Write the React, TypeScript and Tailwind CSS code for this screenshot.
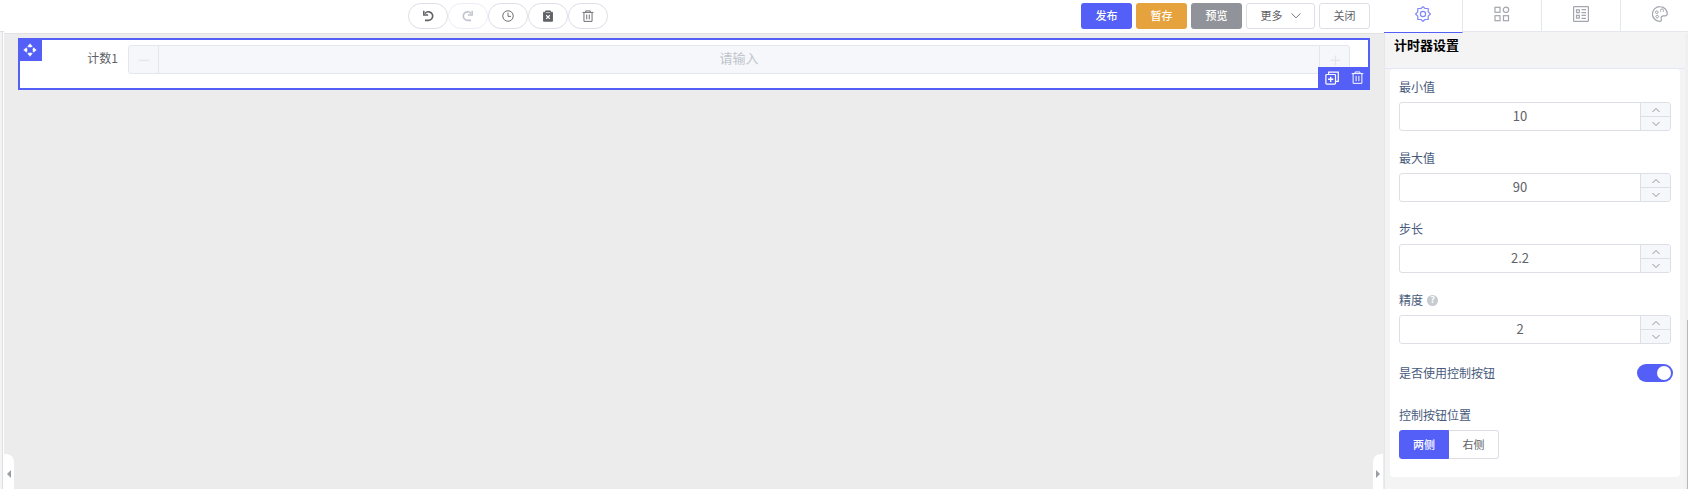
import React from 'react'

function Svg({ size = 12, children }: { size?: number; children: React.ReactNode }) {
  return (
    <svg
      width={size}
      height={size}
      viewBox="0 0 16 16"
      fill="none"
      stroke="currentColor"
      strokeWidth="1.2"
      aria-hidden="true"
    >
      {children}
    </svg>
  )
}

const UndoIcon = () => (
  <Svg>
    <path d="M4 4.6A5.7 5.7 0 1 1 8.5 13.8H4" strokeWidth="2.2" />
    <path d="M2.4 1v5.8h5.8" strokeWidth="2" />
  </Svg>
)

const RedoIcon = () => (
  <Svg>
    <path d="M12 4.6A5.7 5.7 0 1 0 7.5 13.8H12" strokeWidth="2.2" />
    <path d="M13.6 1v5.8H7.8" strokeWidth="2" />
  </Svg>
)

const ClockIcon = () => (
  <Svg>
    <circle cx="8" cy="8" r="7" />
    <path d="M8 3.5V8.5h4" />
  </Svg>
)

const ClearIcon = () => (
  <Svg>
    <path d="M2 3h2.8V1.2h6.4V3H14v12H2z" fill="currentColor" />
    <path d="M5.2 3.4h5.6" stroke="#fff" strokeWidth="0.8" />
    <path d="M5.6 7l4.8 4.8M10.4 7l-4.8 4.8" stroke="#fff" strokeWidth="1.5" />
  </Svg>
)

const TrashIcon = ({ size = 12 }: { size?: number }) => (
  <Svg size={size}>
    <path d="M.8 3.2h14.4M5 3V1.2h6V3M2.6 3.4v11.8h10.8V3.4M6.3 6v6.5M9.7 6v6.5" />
  </Svg>
)

const CopyIcon = () => (
  <Svg size={14}>
    <path d="M4.2 4V1.2h11v10.6H12" strokeWidth="1.4" />
    <rect x="1" y="4" width="11" height="11" rx="1" strokeWidth="1.4" />
    <path d="M6.5 6.5v6M3.5 9.5h6" strokeWidth="1.6" />
  </Svg>
)

const MoveIcon = () => (
  <Svg size={14}>
    <path
      d="M8 .8l2.6 3.2-1.4.6H6.800L5.400 4zM8 15.200l2.600-3.200-1.400-.6H6.800l-1.400.6zM.8 8L4 5.400l.6 1.400v2.400L4 10.600zM15.200 8L12 5.400l-.6 1.400v2.400l.6 1.400z"
      fill="currentColor"
      strokeWidth="0.6"
      strokeLinejoin="round"
    />
  </Svg>
)

const Chevron = ({ up = false, size = 8 }: { up?: boolean; size?: number }) => (
  <Svg size={size}>
    <path d={up ? 'M1 12l7-7 7 7' : 'M1 4l7 7 7-7'} strokeWidth={size > 8 ? 1.4 : 2} />
  </Svg>
)

const GearIcon = () => (
  <Svg size={16}>
    <path
      d="M8 .6l2 1.9h3.2v3.3L15.4 8l-2.2 2.2v3.3H10l-2 1.9-2-1.9H2.8v-3.3L.6 8l2.2-2.2V2.5H6z"
      strokeLinejoin="round"
    />
    <circle cx="8" cy="8" r="2.6" />
  </Svg>
)

const GridIcon = () => (
  <Svg size={16}>
    <rect x="1" y="1.3" width="5" height="5" />
    <circle cx="12" cy="3.8" r="2.7" />
    <rect x="1" y="9.7" width="5" height="5" />
    <rect x="9.5" y="9.7" width="5" height="5" />
  </Svg>
)

const FormIcon = () => (
  <Svg size={16}>
    <rect x=".6" y=".6" width="14.8" height="14.8" rx=".6" />
    <rect x="3.5" y="3.8" width="2.8" height="2.8" />
    <rect x="3.5" y="9.3" width="2.8" height="2.8" />
    <path d="M8.5 3.6H13M8.5 6.6H13M8.5 9.4H13M8.5 12.4H13" />
  </Svg>
)

const PaletteIcon = () => (
  <Svg size={16}>
    <path d="M8 .7a7.3 7.3 0 0 0-.5 14.6c2.3 0 1.9-1.5 1.7-2.8-.3-1.7.6-2.7 2.3-2.7 1.7.1 3.8.1 3.8-2A7.3 7.3 0 0 0 8 .7z" />
    <circle cx="4.8" cy="6.2" r="1.3" strokeWidth="1" />
    <circle cx="5.2" cy="10.6" r="1.3" strokeWidth="1" />
    <path d="M8.6 5.8V4.3a1.4 1.4 0 0 1 2.8 0v1.5" strokeWidth="1" />
  </Svg>
)

function Caret({ right = false }: { right?: boolean }) {
  return (
    <svg width="4" height="8" viewBox="0 0 4 8" fill="#9a9da3" aria-hidden="true">
      <path d={right ? 'M0 0l4 4-4 4z' : 'M4 0L0 4l4 4z'} />
    </svg>
  )
}

function RoundButton({ label, disabled, children }: { label: string; disabled?: boolean; children: React.ReactNode }) {
  return (
    <button
      type="button"
      aria-label={label}
      disabled={disabled}
      className="flex h-[26px] w-10 items-center justify-center rounded-full border border-[#dcdfe6] bg-white text-[#606266] disabled:border-[#ebeef5] disabled:text-[#c0c4cc]"
    >
      {children}
    </button>
  )
}

interface NumberFieldProps {
  id: string
  label: string
  value: number
  help?: boolean
  onChange: (v: number) => void
}

function NumberField({ id, label, value, help, onChange }: NumberFieldProps) {
  const stepBtn = 'flex flex-1 items-center justify-center text-[#909399]'
  return (
    <div className="mb-3">
      <label htmlFor={id} className="flex h-[30px] items-center text-[12px] text-[#475a7b]">
        {label}
        {help && (
          <span className="ml-1 flex size-[11px] items-center justify-center rounded-full bg-[#c8cad2] text-[9px] font-bold text-white">
            ?
          </span>
        )}
      </label>
      <div className="flex h-[29px] overflow-hidden rounded-[3px] border border-[#dcdfe6] bg-white">
        <input
          id={id}
          value={value}
          onChange={(e) => onChange(Number(e.target.value) || 0)}
          className="min-w-0 flex-1 pb-0.5 text-center text-[13px] text-[#606266] outline-none"
        />
        <div className="flex w-[30px] flex-col border-l border-[#dcdfe6] bg-[#f5f7fa]">
          <button type="button" aria-label={`${label} +`} className={stepBtn} onClick={() => onChange(value + 1)}>
            <Chevron up />
          </button>
          <button
            type="button"
            aria-label={`${label} -`}
            className={`${stepBtn} border-t border-[#dcdfe6]`}
            onClick={() => onChange(value - 1)}
          >
            <Chevron />
          </button>
        </div>
      </div>
    </div>
  )
}

const tabs = [
  { label: '组件设置', icon: <GearIcon /> },
  { label: '组件', icon: <GridIcon /> },
  { label: '表单', icon: <FormIcon /> },
  { label: '主题', icon: <PaletteIcon /> },
]

const positions = [
  { value: 'both', label: '两侧' },
  { value: 'right', label: '右侧' },
]

export default function App() {
  const [config, setConfig] = React.useState({ min: 10, max: 90, step: 2.2, precision: 2 })
  const [controls, setControls] = React.useState(true)
  const [position, setPosition] = React.useState('both')
  const [tab, setTab] = React.useState(0)

  const update = (key: string) => (v: number) => setConfig({ ...config, [key]: v })
  const actionBtn = 'h-[26px] w-[51px] rounded-[3px] pb-px text-[11px]'
  const edgeBtn = 'flex w-[30px] items-center justify-center border-[#e4e7ed] text-[#e4e6ea]'

  return (
    <div className="flex h-screen overflow-hidden bg-[#ececec] font-['Noto_Sans_CJK_SC','Liberation_Sans',sans-serif]">
      {/* 左侧面板边缘 */}
      <div className="flex w-1 shrink-0 flex-col bg-white">
        <div className="h-8 border-b border-[#dcdfe6]" />
        <div className="mr-px flex-1 border-r border-[#dcdfe6] bg-[#f4f4f4]" />
      </div>

      <main className="relative flex min-w-0 flex-1 flex-col">
        <header className="flex h-[34px] shrink-0 items-start border-b border-[#e2e2e4] bg-white pt-[3px] pr-[14px]">
          <div className="flex flex-1 justify-center pr-[69px]">
            <RoundButton label="撤销"><UndoIcon /></RoundButton>
            <RoundButton label="重做" disabled><RedoIcon /></RoundButton>
            <RoundButton label="历史"><ClockIcon /></RoundButton>
            <RoundButton label="清空"><ClearIcon /></RoundButton>
            <RoundButton label="删除"><TrashIcon /></RoundButton>
          </div>
          <div className="flex gap-1">
            <button type="button" className={`${actionBtn} bg-[#535ff7] font-medium text-white`}>发布</button>
            <button type="button" className={`${actionBtn} bg-[#e6a23c] font-medium text-white`}>暂存</button>
            <button type="button" className={`${actionBtn} bg-[#909399] font-medium text-white`}>预览</button>
            <button
              type="button"
              className="flex h-[26px] w-[69px] items-center justify-center gap-2 rounded-[3px] border border-[#dcdfe6] pb-px text-[11px] text-[#606266]"
            >
              更多
              <Chevron size={10} />
            </button>
            <button type="button" className={`${actionBtn} border border-[#dcdfe6] text-[#606266]`}>关闭</button>
          </div>
        </header>

        <section className="relative mx-[14px] mt-1 h-[52px] shrink-0 border-2 border-[#535ff7] bg-white pt-[5px] pr-[18px]">
          <div className="flex">
            <label
              htmlFor="count"
              className="flex h-[29px] w-[108px] shrink-0 items-center justify-end pr-[10px] pb-[3px] text-[12px] text-[#606266]"
            >
              计数1
            </label>
            <div className="flex h-[29px] flex-1 overflow-hidden rounded-[3px] border border-[#e4e7ed] bg-[#f5f7fa]">
              <button type="button" disabled aria-label="减少" className={`${edgeBtn} border-r`}>
                <Svg><path d="M1 8.6h14" strokeWidth="1.6" /></Svg>
              </button>
              <input
                id="count"
                disabled
                placeholder="请输入"
                className="min-w-0 flex-1 pb-[3px] text-center text-[13px] placeholder:text-[#c0c4cc]"
              />
              <button type="button" disabled aria-label="增加" className={`${edgeBtn} border-l`}>
                <Svg><path d="M2 8.6h13M8.6 2v13" strokeWidth="1.6" /></Svg>
              </button>
            </div>
          </div>
          <button
            type="button"
            aria-label="移动"
            className="absolute -top-0.5 -left-0.5 flex h-[23px] w-6 items-center justify-center bg-[#535ff7] text-white"
          >
            <MoveIcon />
          </button>
          <div className="absolute -right-0.5 -bottom-0.5 flex h-[23px] w-[52px] items-center justify-center gap-3 bg-[#535ff7] pb-0.5 text-white">
            <button type="button" aria-label="复制"><CopyIcon /></button>
            <button type="button" aria-label="删除组件"><TrashIcon size={13} /></button>
          </div>
        </section>

        {/* 收起按钮 */}
        <button
          type="button"
          aria-label="收起左侧"
          className="absolute bottom-0 left-0 flex h-[35px] w-[10px] items-center justify-center rounded-tr-[8px] bg-white pt-1"
        >
          <Caret />
        </button>
        <button
          type="button"
          aria-label="收起右侧"
          className="absolute right-px bottom-0 flex h-[35px] w-[10px] items-center justify-center rounded-tl-[8px] bg-white pt-1"
        >
          <Caret right />
        </button>
      </main>

      <aside className="flex w-[304px] shrink-0 flex-col bg-[#f4f4f4]">
        <nav className="flex h-[33px] shrink-0 items-start overflow-hidden">
          {tabs.map((t, i) => (
            <button
              key={t.label}
              type="button"
              aria-label={t.label}
              onClick={() => setTab(i)}
              className={`flex w-[79px] shrink-0 items-center justify-center border-r border-b border-r-[#e4e7ed] bg-white pb-1 ${
                tab === i ? 'h-[33px] border-b-[#535ff7] text-[#8087fa]' : 'h-8 border-b-[#e4e7ed] text-[#a3a6ad]'
              }`}
            >
              {t.icon}
            </button>
          ))}
        </nav>
        <div className="flex flex-1">
          <div className="flex flex-1 flex-col border-l border-[#e4e7ed]">
            <h2 className="flex h-9 shrink-0 items-start border-b border-[#e4e7f5] pt-0.5 pl-[9px] text-[13px] font-bold text-black">
              计时器设置
            </h2>
            <div className="mx-[5px] rounded bg-white px-[9px] pt-[3px] pb-[18px]">
              <NumberField id="min" label="最小值" value={config.min} onChange={update('min')} />
              <NumberField id="max" label="最大值" value={config.max} onChange={update('max')} />
              <NumberField id="step" label="步长" value={config.step} onChange={update('step')} />
              <NumberField id="precision" label="精度" help value={config.precision} onChange={update('precision')} />

              <label className="-mr-0.5 mb-[11px] flex h-[33px] items-center justify-between text-[12px] text-[#475a7b]">
                是否使用控制按钮
                <input
                  type="checkbox"
                  role="switch"
                  checked={controls}
                  onChange={(e) => setControls(e.target.checked)}
                  className="flex h-[18px] w-9 appearance-none items-center rounded-full bg-[#dcdfe6] px-0.5 before:size-[14px] before:rounded-full before:bg-white checked:justify-end checked:bg-[#535ff7]"
                />
              </label>

              <fieldset>
                <legend className="flex h-[30px] items-center text-[12px] text-[#475a7b]">控制按钮位置</legend>
                <div className="flex">
                  {positions.map((p) => (
                    <label
                      key={p.value}
                      className="relative flex h-[29px] w-[50px] items-center justify-center border border-[#dcdfe6] pb-px text-[11px] text-[#606266] first:rounded-l-[3px] last:rounded-r-[3px] last:border-l-0 has-checked:border-[#535ff7] has-checked:bg-[#535ff7] has-checked:font-medium has-checked:text-white"
                    >
                      <input
                        type="radio"
                        name="position"
                        value={p.value}
                        checked={position === p.value}
                        onChange={() => setPosition(p.value)}
                        className="sr-only"
                      />
                      {p.label}
                    </label>
                  ))}
                </div>
              </fieldset>
            </div>
          </div>
          {/* 滚动条 */}
          <div className="flex w-[3px] flex-col items-end justify-end bg-[#f0f0f0]">
            <div className="h-[37%] w-px bg-[#b8b8b8]" />
          </div>
        </div>
      </aside>
    </div>
  )
}
